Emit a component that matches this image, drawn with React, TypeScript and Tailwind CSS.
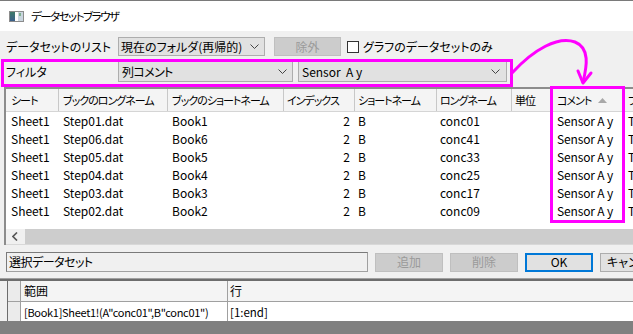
import React from "react";

function Chevron() {
  return (
    <svg width="9" height="5" viewBox="0 0 9 5" className="shrink-0">
      <polyline points="0.5,0.5 4.5,4.5 8.5,0.5" fill="none" stroke="#444" strokeWidth="1" />
    </svg>
  );
}

function TitleIcon() {
  return (
    <svg width="15" height="11" viewBox="0 0 15 11">
      <defs>
        <linearGradient id="g1" x1="0" y1="0" x2="0" y2="1">
          <stop offset="0" stopColor="#3d7a6a" />
          <stop offset="1" stopColor="#3b5f8a" />
        </linearGradient>
      </defs>
      <rect x="0.5" y="0.5" width="14" height="10" fill="#eef2f4" stroke="#8c8c8c" />
      <rect x="1" y="1" width="5" height="9" fill="url(#g1)" />
      <rect x="6" y="1" width="3" height="9" fill="#ffffff" />
      <rect x="9" y="1" width="5" height="9" fill="#c9d6df" />
      <rect x="10" y="2" width="2" height="3" fill="#7fb08f" />
    </svg>
  );
}

const cols = [
  "w-[53px] pl-[5px]",
  "w-[109px] pl-[4px]",
  "w-[116px] pl-[4px]",
  "w-[71px] pl-[3px]",
  "w-[82px] pl-[3px]",
  "w-[75px] pl-[3px]",
  "w-[39px] pl-[3px]",
  "w-[74px] pl-[6px]",
  "w-[100px] pl-[3px]",
];

const headers = [
  "シート",
  "ブックのロングネーム",
  "ブックのショートネーム",
  "インデックス",
  "ショートネーム",
  "ロングネーム",
  "単位",
  "コメント",
  "ファイル",
];

const rows = [
  ["Sheet1", "Step01.dat", "Book1", "2", "B", "conc01", "", "Sensor A y", "T"],
  ["Sheet1", "Step06.dat", "Book6", "2", "B", "conc41", "", "Sensor A y", "T"],
  ["Sheet1", "Step05.dat", "Book5", "2", "B", "conc33", "", "Sensor A y", "T"],
  ["Sheet1", "Step04.dat", "Book4", "2", "B", "conc25", "", "Sensor A y", "T"],
  ["Sheet1", "Step03.dat", "Book3", "2", "B", "conc17", "", "Sensor A y", "T"],
  ["Sheet1", "Step02.dat", "Book2", "2", "B", "conc09", "", "Sensor A y", "T"],
];

export default function App() {
  return (
    <div className="relative w-[633px] h-[334px] overflow-hidden bg-[#f0f0f0] text-[12px] leading-[16px] text-black font-['Noto_Sans_CJK_JP',sans-serif] [font-feature-settings:'palt']">
      {/* Title bar */}
      <div className="h-[31px] bg-white border-t border-[#7a7a7a] flex items-center pl-[9px]">
        <TitleIcon />
        <span className="ml-[7px] text-[11.5px] tracking-[-1.5px]">データセットブラウザ</span>
      </div>

      {/* Row 1 */}
      <div className="mt-[6px] h-[19px] flex items-center overflow-hidden">
        <span className="w-[118px] shrink-0 pl-[6px] whitespace-nowrap">データセットのリスト</span>
        <div className="w-[147px] shrink-0 h-[19px] bg-[#e1e1e1] border border-[#adadad] flex items-center pl-[2px] pr-[5px] justify-between">
          <span className="whitespace-nowrap">現在のフォルダ(再帰的)</span>
          <Chevron />
        </div>
        <div className="ml-[9px] w-[67px] shrink-0 h-[19px] bg-[#cccccc] border border-[#bfbfbf] flex items-center justify-center text-[#9a9a9a]">
          除外
        </div>
        <div className="ml-[6px] w-[12px] h-[12px] shrink-0 bg-white border border-[#333333]" />
        <span className="ml-[4px] whitespace-nowrap">グラフのデータセットのみ</span>
      </div>

      {/* Row 2 filter */}
      <div className="mt-[5px] h-[21px] flex items-center overflow-hidden">
        <span className="w-[118px] shrink-0 pl-[6px]">フィルタ</span>
        <div className="w-[175px] shrink-0 h-[21px] bg-[#e1e1e1] border border-[#adadad] flex items-center pl-[3px] pr-[5px] justify-between">
          <span className="tracking-[-0.6px]">列コメント</span>
          <Chevron />
        </div>
        <div className="ml-[5px] w-[209px] shrink-0 h-[21px] bg-[#e1e1e1] border border-[#adadad] flex items-center pl-[3px] pr-[6px] justify-between">
          <span>Sensor&nbsp; A y</span>
          <Chevron />
        </div>
      </div>

      {/* Upper grid */}
      <div className="mt-[5px] ml-[4px] h-[158px] border-l-2 border-t-2 border-[#8c8c8c] flex flex-col overflow-hidden">
        <div className="h-[23px] flex bg-[#f4f4f4] border-b border-[#d5d5d5] shrink-0">
          {headers.map((h, i) => (
            <div
              key={i}
              className={`${cols[i]} shrink-0 h-full flex items-center border-r border-[#c8c8c8] whitespace-nowrap overflow-hidden text-[11px] tracking-[-1px]`}
            >
              <span>{h}</span>
              {i === 7 && (
                <svg width="9" height="5" viewBox="0 0 9 5" className="ml-auto mr-[17px]">
                  <polygon points="4.5,0 9,5 0,5" fill="#a8a8a8" />
                </svg>
              )}
            </div>
          ))}
        </div>
        <div className="bg-white flex-1 flex flex-col">
          {rows.map((r, ri) => (
            <div key={ri} className="h-[18px] flex shrink-0">
              {r.map((c, ci) => (
                <div
                  key={ci}
                  className={`${cols[ci]} shrink-0 h-full flex items-center whitespace-nowrap overflow-hidden ${
                    ci === 3 ? "justify-end pr-[5px]" : ""
                  } ${ci === 7 ? "tracking-[-0.15px]" : ""}`}
                >
                  {c}
                </div>
              ))}
            </div>
          ))}
        </div>
        {/* scrollbar */}
        <div className="h-[15px] flex shrink-0 bg-[#f0f0f0]">
          <div className="w-[17px] h-full flex items-center justify-center">
            <svg width="6" height="9" viewBox="0 0 6 9">
              <polyline points="5,0.5 1,4.5 5,8.5" fill="none" stroke="#555" strokeWidth="1.6" />
            </svg>
          </div>
          <div className="ml-[2px] flex-1 h-full bg-[#cdcdcd]" />
        </div>
        <div className="h-[1px] bg-[#d8d8d8] shrink-0" />
      </div>

      {/* Row 3 */}
      <div className="mt-[7px] h-[20px] flex items-center overflow-hidden">
        <div className="ml-[6px] w-[362px] shrink-0 h-[20px] border border-[#7a7a7a] border-r-[#a0a0a0] border-b-[#a0a0a0] bg-[#f0f0f0] flex items-center pl-[2px] tracking-[-0.5px]">
          選択データセット
        </div>
        <div className="ml-[7px] w-[68px] shrink-0 h-[19px] bg-[#cccccc] border border-[#bfbfbf] flex items-center justify-center text-[#9a9a9a]">
          追加
        </div>
        <div className="ml-[7px] w-[68px] shrink-0 h-[19px] bg-[#cccccc] border border-[#bfbfbf] flex items-center justify-center text-[#9a9a9a]">
          削除
        </div>
        <div className="ml-[7px] w-[68px] shrink-0 h-[19px] bg-[#e1e1e1] border-2 border-[#0078d7] flex items-center justify-center">
          OK
        </div>
        <div className="ml-[7px] w-[68px] h-[19px] shrink-0 bg-[#e1e1e1] border border-[#adadad] flex items-center pl-[6px] whitespace-nowrap">
          キャンセル
        </div>
      </div>

      {/* separator */}
      <div className="mt-[6px] border-t border-[#a0a0a0]" />
      <div className="border-t-2 border-[#6d6d6d]" />

      {/* Lower grid */}
      <div className="ml-[7px] border-l border-[#6d6d6d] flex flex-col">
        <div className="h-[21px] flex bg-[#f4f4f4] border-b border-[#a0a0a0]">
          <div className="w-[13px] h-full bg-[#ebebeb] border-r border-[#a0a0a0] shrink-0" />
          <div className="w-[207px] h-full flex items-center pl-[3px] border-r border-[#a0a0a0] shrink-0">範囲</div>
          <div className="flex-1 h-full flex items-center pl-[2px]">行</div>
        </div>
        <div className="h-[19px] flex bg-white">
          <div className="w-[13px] h-full bg-[#ebebeb] border-r border-[#a0a0a0] shrink-0" />
          <div className="w-[207px] h-full flex items-center pl-[3px] border-r border-[#a0a0a0] shrink-0 whitespace-nowrap overflow-hidden text-[11px] tracking-[-0.3px]">
            [Book1]Sheet1!(A"conc01",B"conc01")
          </div>
          <div className="flex-1 h-full flex items-center pl-[2px] text-[11.5px]">[1:end]</div>
        </div>
      </div>
      <div className="h-[20px] bg-[#808080]" />

      {/* Annotations */}
      <div className="absolute left-[1px] top-[59px] w-[512px] h-[28px] border-[3px] border-[#ff00ff] pointer-events-none" />
      <div className="absolute left-[550px] top-[86px] w-[75px] h-[137px] border-[3px] border-[#ff00ff] pointer-events-none" />
      <svg className="absolute left-0 top-0 pointer-events-none" width="633" height="334" viewBox="0 0 633 334">
        <path
          d="M 512 73 C 534 49, 558 36, 575 42 C 590 48, 587 66, 583 82"
          fill="none"
          stroke="#ff00ff"
          strokeWidth="3"
          strokeLinecap="round"
        />
        <polyline
          points="578,71 583,83 591,73"
          fill="none"
          stroke="#ff00ff"
          strokeWidth="3"
          strokeLinecap="round"
          strokeLinejoin="round"
        />
      </svg>
    </div>
  );
}
